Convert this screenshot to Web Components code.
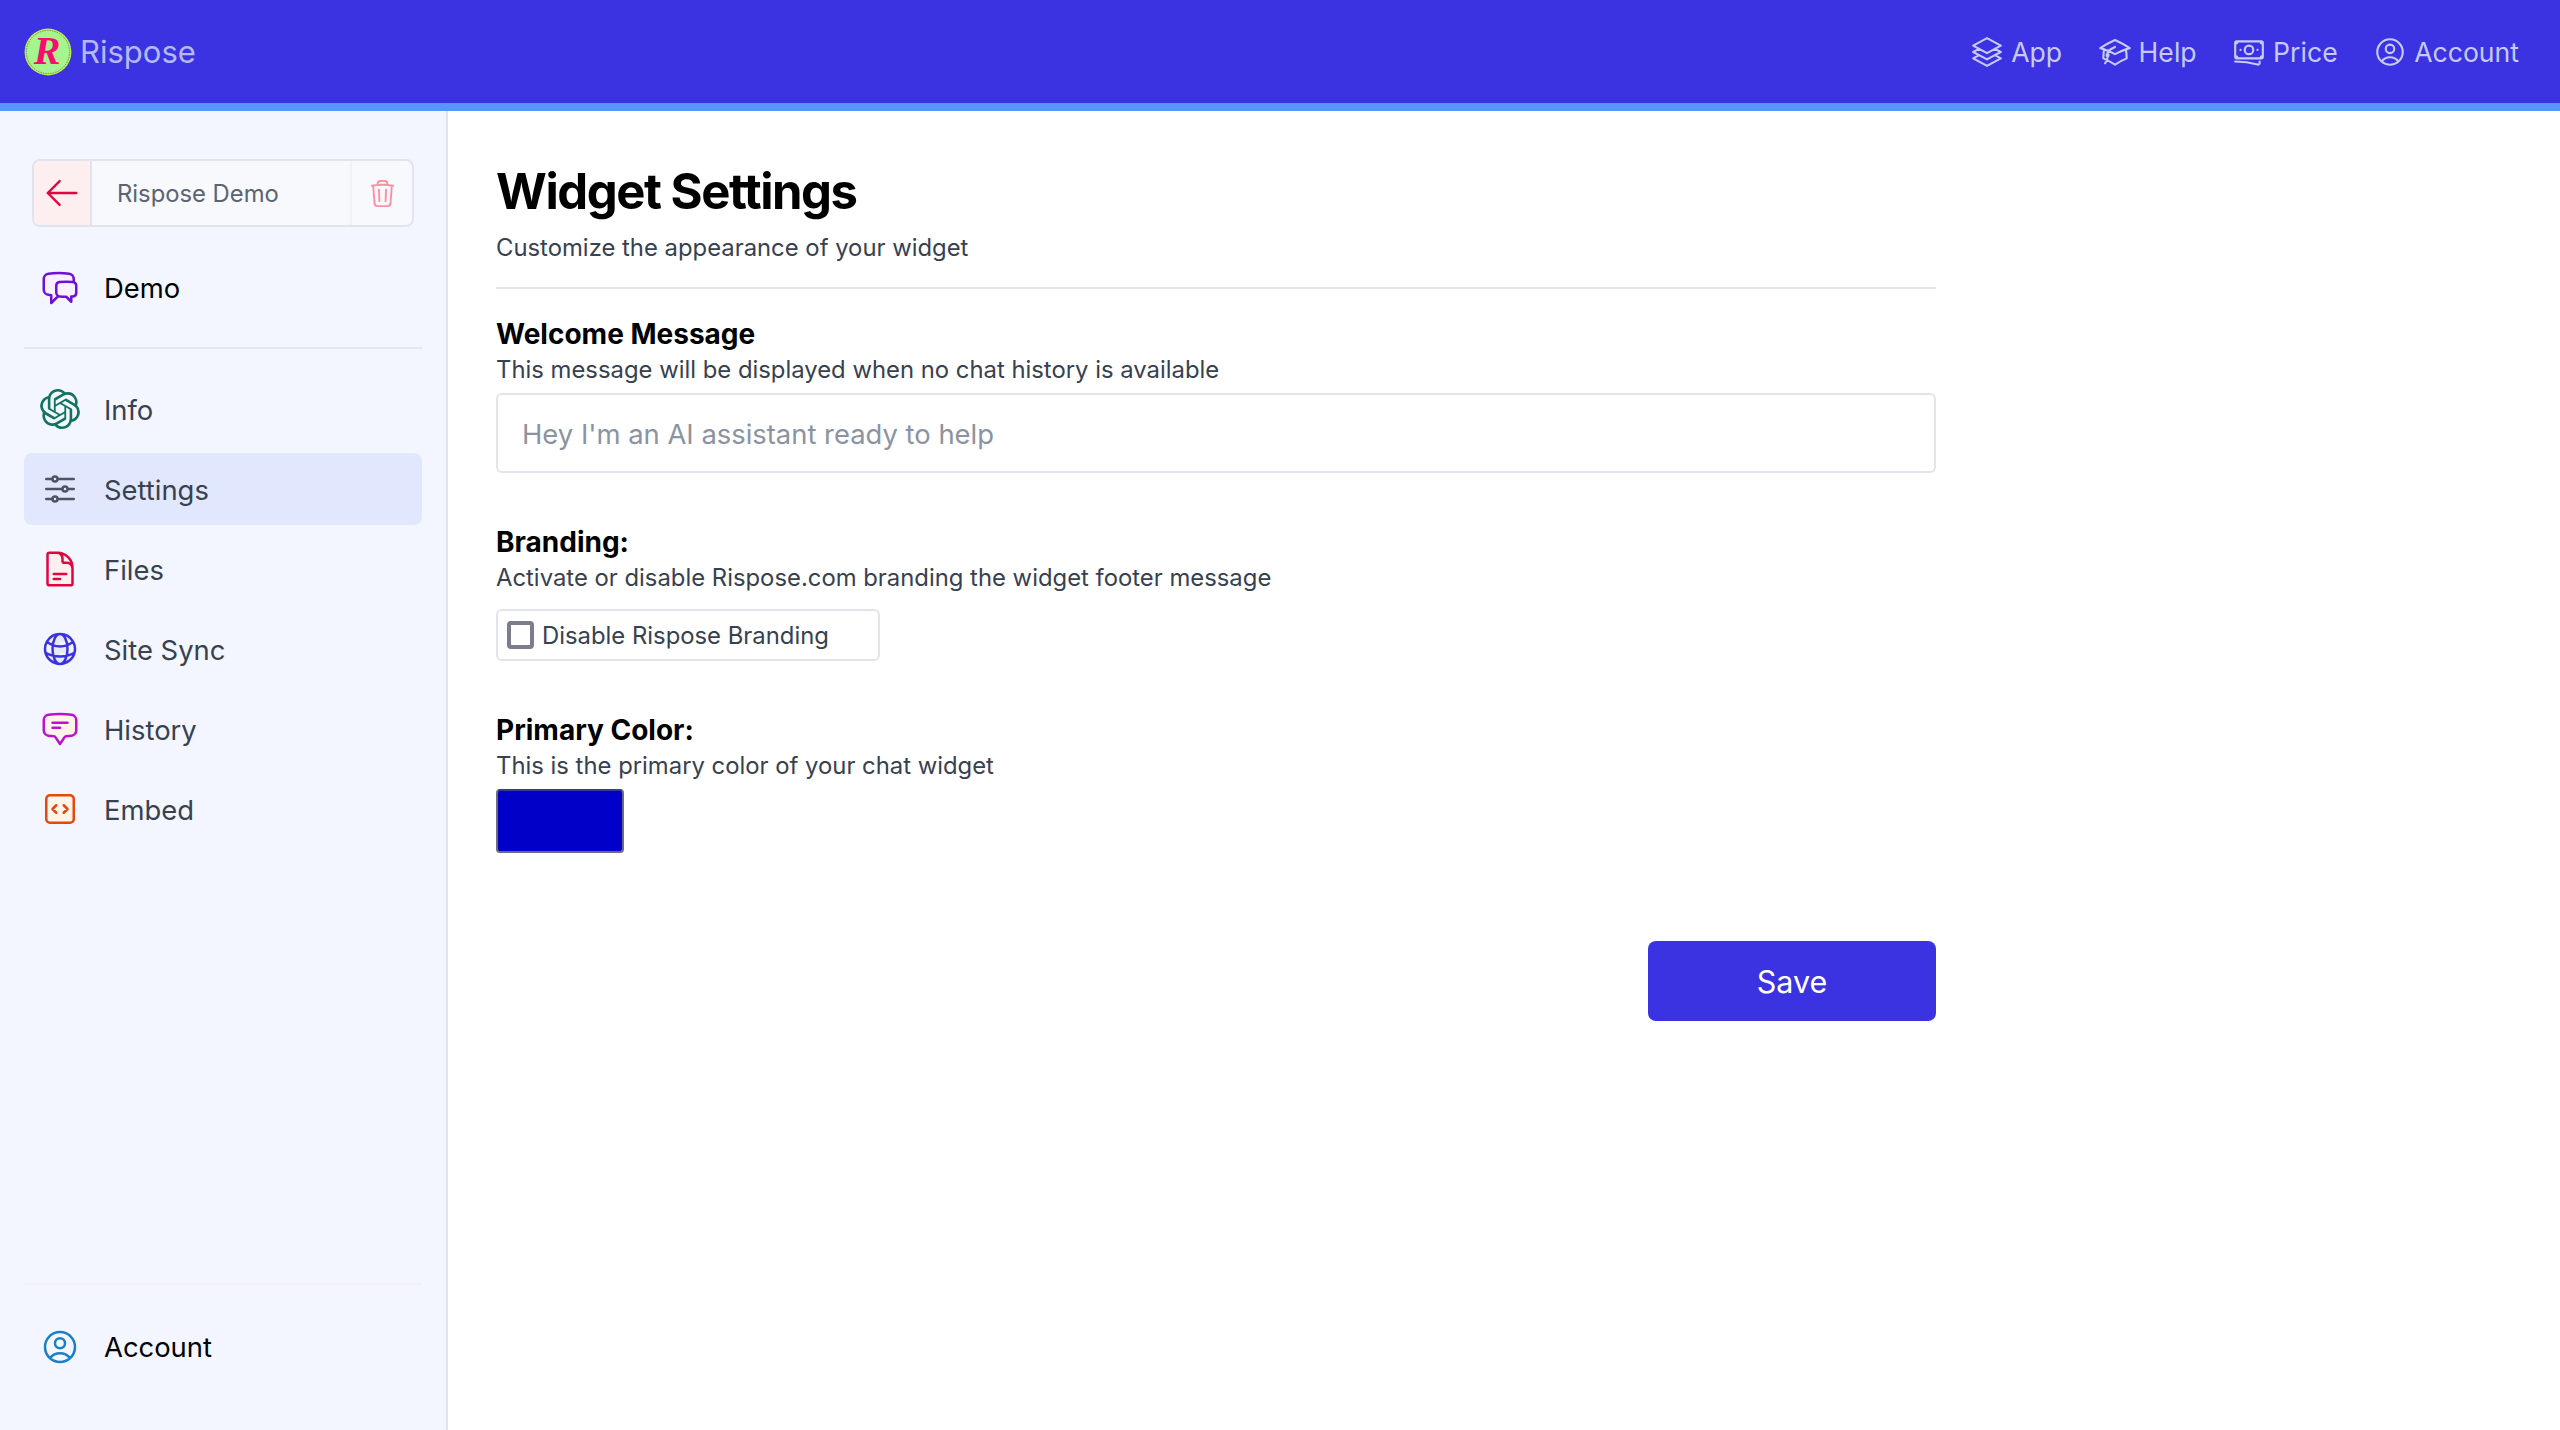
<!doctype html>
<html lang="en">
<head>
<meta charset="utf-8">
<title>Widget Settings</title>
<style>
  html, body { margin: 0; height: 100%; overflow: hidden; background: #fff; }
  body { font-family: Inter, "Liberation Sans", sans-serif; color: #000; }
</style>
</head>
<body>
<app-shell>
  <app-header slot="header">
    <top-link icon="stack">App</top-link>
    <top-link icon="cap">Help</top-link>
    <top-link icon="money">Price</top-link>
    <top-link icon="user">Account</top-link>
  </app-header>
  <side-bar slot="side">
    <project-switcher name="Rispose Demo"></project-switcher>
    <side-item icon="chats" tone="#6d11d6" fill="#f6f0ff" strong>Demo</side-item>
    <side-rule></side-rule>
    <side-item icon="openai" tone="#13735f" solid>Info</side-item>
    <side-item icon="sliders" tone="#4b5563" active>Settings</side-item>
    <side-item icon="doc" tone="#e0063f" fill="#fdeef0">Files</side-item>
    <side-item icon="globe" tone="#3b32e2" fill="#e6eafd">Site Sync</side-item>
    <side-item icon="bubble" tone="#bd11d1" fill="#fff3ea">History</side-item>
    <side-item icon="code" tone="#e04a0b" fill="#fff3ea">Embed</side-item>
    <side-item slot="foot" icon="user" tone="#1a7fc9" strong>Account</side-item>
  </side-bar>
  <widget-settings></widget-settings>
</app-shell>

<script>
const ICONS = {
  stack: "M6.429 9.75 2.25 12l4.179 2.25m0-4.5 5.571 3 5.571-3m-11.142 0L2.25 7.5 12 2.25l9.75 5.25-4.179 2.25m0 0L21.75 12l-4.179 2.25m0 0 4.179 2.25L12 21.75 2.25 16.5l4.179-2.25m11.142 0-5.571 3-5.571-3",
  cap: "M4.26 10.147a60.438 60.438 0 0 0-.491 6.347A48.62 48.62 0 0 1 12 20.904a48.62 48.62 0 0 1 8.232-4.41 60.46 60.46 0 0 0-.491-6.347m-15.482 0a50.636 50.636 0 0 0-2.658-.813A59.906 59.906 0 0 1 12 3.493a59.903 59.903 0 0 1 10.399 5.84c-.896.248-1.783.52-2.658.814m-15.482 0A50.717 50.717 0 0 1 12 13.489a50.702 50.702 0 0 1 7.74-3.342M6.75 15a.75.75 0 1 0 0-1.5.75.75 0 0 0 0 1.5Zm0 0v-3.675A55.378 55.378 0 0 1 12 8.443m-7.007 11.55A5.981 5.981 0 0 0 6.75 15.75v-1.5",
  money: "M2.25 18.75a60.07 60.07 0 0 1 15.797 2.101c.727.198 1.453-.342 1.453-1.096V18.75M3.75 4.5v.75A.75.75 0 0 1 3 6h-.75m0 0v-.375c0-.621.504-1.125 1.125-1.125H20.25M2.25 6v9m18-10.5v.75c0 .414.336.75.75.75h.75m-1.5-1.5h.375c.621 0 1.125.504 1.125 1.125v9.75c0 .621-.504 1.125-1.125 1.125h-.375m1.5-1.5H21a.75.75 0 0 0-.75.75v.75m0 0H3.75m0 0h-.375a1.125 1.125 0 0 1-1.125-1.125V15m1.5 1.5v-.75A.75.75 0 0 0 3 15h-.75M15 10.5a3 3 0 1 1-6 0 3 3 0 0 1 6 0Zm3 0h.008v.008H18V10.5Zm-12 0h.008v.008H6V10.5Z",
  user: "M17.982 18.725A7.488 7.488 0 0 0 12 15.75a7.488 7.488 0 0 0-5.982 2.975m11.963 0a9 9 0 1 0-11.963 0m11.963 0A8.966 8.966 0 0 1 12 21a8.966 8.966 0 0 1-5.982-2.275M15 9.75a3 3 0 1 1-6 0 3 3 0 0 1 6 0Z",
  back: "M10.5 19.5 3 12m0 0 7.5-7.5M3 12h18",
  trash: "m14.74 9-.346 9m-4.788 0L9.26 9m9.968-3.21c.342.052.682.107 1.022.166m-1.022-.165L18.16 19.673a2.25 2.25 0 0 1-2.244 2.077H8.084a2.25 2.25 0 0 1-2.244-2.077L4.772 5.79m14.456 0a48.108 48.108 0 0 0-3.478-.397m-12 .562c.34-.059.68-.114 1.022-.165m0 0a48.11 48.11 0 0 1 3.478-.397m7.5 0v-.916c0-1.18-.91-2.164-2.09-2.201a51.964 51.964 0 0 0-3.32 0c-1.18.037-2.09 1.022-2.09 2.201v.916m7.5 0a48.667 48.667 0 0 0-7.5 0",
  chats: "M20.25 8.511c.884.284 1.5 1.128 1.5 2.097v4.286c0 1.136-.847 2.1-1.98 2.193-.34.027-.68.052-1.02.072v3.091l-3-3c-1.354 0-2.694-.055-4.02-.163a2.115 2.115 0 0 1-.825-.242m9.345-8.334a2.126 2.126 0 0 0-.476-.095 48.64 48.64 0 0 0-8.048 0c-1.131.094-1.976 1.057-1.976 2.192v4.286c0 .837.46 1.58 1.155 1.951m9.345-8.334V6.637c0-1.621-1.152-3.026-2.76-3.235A48.455 48.455 0 0 0 11.25 3c-2.115 0-4.198.137-6.24.402-1.608.209-2.76 1.614-2.76 3.235v6.226c0 1.621 1.152 3.026 2.76 3.235.577.075 1.157.14 1.74.194V21l4.155-4.155",
  sliders: "M10.5 6h9.75M10.5 6a1.5 1.5 0 1 1-3 0m3 0a1.5 1.5 0 1 0-3 0M3.75 6H7.5m3 12h9.75m-9.75 0a1.5 1.5 0 0 1-3 0m3 0a1.5 1.5 0 0 0-3 0m-3.75 0H7.5m9-6h3.75m-3.75 0a1.5 1.5 0 0 1-3 0m3 0a1.5 1.5 0 0 0-3 0m-9.75 0h9.75",
  doc: "M19.5 14.25v-2.625a3.375 3.375 0 0 0-3.375-3.375h-1.5A1.125 1.125 0 0 1 13.5 7.125v-1.5a3.375 3.375 0 0 0-3.375-3.375H8.25m0 12.75h7.5m-7.5 3H12M10.5 2.25H5.625c-.621 0-1.125.504-1.125 1.125v17.25c0 .621.504 1.125 1.125 1.125h12.75c.621 0 1.125-.504 1.125-1.125V11.25a9 9 0 0 0-9-9Z",
  globe: "M12 21a9.004 9.004 0 0 0 8.716-6.747M12 21a9.004 9.004 0 0 1-8.716-6.747M12 21c2.485 0 4.5-4.03 4.5-9S14.485 3 12 3m0 18c-2.485 0-4.5-4.03-4.5-9S9.515 3 12 3m0 0a8.997 8.997 0 0 1 7.843 4.582M12 3a8.997 8.997 0 0 0-7.843 4.582m15.686 0A11.953 11.953 0 0 1 12 10.5c-2.998 0-5.74-1.1-7.843-2.918m15.686 0A8.959 8.959 0 0 1 21 12c0 .778-.099 1.533-.284 2.253m0 0A17.919 17.919 0 0 1 12 16.5c-3.162 0-6.133-.815-8.716-2.247m0 0A9.015 9.015 0 0 1 3 12c0-1.605.42-3.113 1.157-4.418",
  bubble: "M7.5 8.25h9m-9 3H12m-9.75 1.51c0 1.6 1.123 2.994 2.707 3.227 1.129.166 2.27.293 3.423.379.35.026.67.21.865.501L12 21l2.755-4.133a1.14 1.14 0 0 1 .865-.501 48.172 48.172 0 0 0 3.423-.379c1.584-.233 2.707-1.626 2.707-3.228V6.741c0-1.602-1.123-2.995-2.707-3.228A48.394 48.394 0 0 0 12 3c-2.392 0-4.744.175-7.043.513C3.373 3.746 2.25 5.14 2.25 6.741v6.018Z",
  code: "M14.25 9.75 16.5 12l-2.25 2.25m-4.5 0L7.5 12l2.25-2.25M6 20.25h12A2.25 2.25 0 0 0 20.25 18V6A2.25 2.25 0 0 0 18 3.75H6A2.25 2.25 0 0 0 3.75 6v12c0 1.243 1.007 2.25 2.25 2.25Z",
  openai: "M22.2819 9.8211a5.9847 5.9847 0 0 0-.5157-4.9108 6.0462 6.0462 0 0 0-6.5098-2.9A6.0651 6.0651 0 0 0 4.9807 4.1818a5.9847 5.9847 0 0 0-3.9977 2.9 6.0462 6.0462 0 0 0 .7427 7.0966 5.98 5.98 0 0 0 .511 4.9107 6.051 6.051 0 0 0 6.5146 2.9001A5.9847 5.9847 0 0 0 13.2599 24a6.0557 6.0557 0 0 0 5.7718-4.2058 5.9894 5.9894 0 0 0 3.9977-2.9001 6.0557 6.0557 0 0 0-.7475-7.0729zm-9.022 12.6081a4.4755 4.4755 0 0 1-2.8764-1.0408l.1419-.0804 4.7783-2.7582a.7948.7948 0 0 0 .3927-.6813v-6.7369l2.02 1.1686a.071.071 0 0 1 .038.052v5.5826a4.504 4.504 0 0 1-4.4945 4.4944zm-9.6607-4.1254a4.4708 4.4708 0 0 1-.5346-3.0137l.142.0852 4.783 2.7582a.7712.7712 0 0 0 .7806 0l5.8428-3.3685v2.3324a.0804.0804 0 0 1-.0332.0615L9.74 19.9502a4.4992 4.4992 0 0 1-6.1408-1.6464zM2.3408 7.8956a4.485 4.485 0 0 1 2.3655-1.9728V11.6a.7664.7664 0 0 0 .3879.6765l5.8144 3.3543-2.0201 1.1685a.0757.0757 0 0 1-.071 0l-4.8303-2.7865A4.504 4.504 0 0 1 2.3408 7.872zm16.5963 3.8558L13.1038 8.364 15.1192 7.2a.0757.0757 0 0 1 .071 0l4.8303 2.7913a4.4944 4.4944 0 0 1-.6765 8.1042v-5.6772a.79.79 0 0 0-.407-.667zm2.0107-3.0231l-.142-.0852-4.7735-2.7818a.7759.7759 0 0 0-.7854 0L9.409 9.2297V6.8974a.0662.0662 0 0 1 .0284-.0615l4.8303-2.7866a4.4992 4.4992 0 0 1 6.6802 4.66zM8.3065 12.863l-2.02-1.1638a.0804.0804 0 0 1-.038-.0567V6.0742a4.4992 4.4992 0 0 1 7.3757-3.4537l-.142.0805L8.704 5.459a.7948.7948 0 0 0-.3927.6813zm1.0976-2.3654l2.602-1.4998 2.6069 1.4998v2.9994l-2.5974 1.4997-2.6067-1.4997Z"
};

function iconSvg(name, size, tone, fill, solid) {
  if (solid) {
    return `<svg width="${size}" height="${size}" viewBox="0 0 24 24" fill="${tone}"><path d="${ICONS[name]}"/></svg>`;
  }
  return `<svg width="${size}" height="${size}" viewBox="0 0 24 24" fill="${fill || "none"}" stroke="${tone}" stroke-width="1.5" stroke-linecap="round" stroke-linejoin="round"><path d="${ICONS[name]}"/></svg>`;
}

class AppShell extends HTMLElement {
  constructor() {
    super();
    this.attachShadow({ mode: "open" });
    this.shadowRoot.innerHTML = `
<style>
  :host { display: flex; flex-direction: column; height: 100vh; }
  #body { flex: 1; display: flex; min-height: 0; }
</style>
<slot name="header"></slot>
<div id="body">
  <slot name="side"></slot>
  <slot></slot>
</div>`;
  }
}

class AppHeader extends HTMLElement {
  constructor() {
    super();
    this.attachShadow({ mode: "open" });
    this.shadowRoot.innerHTML = `
<style>
  :host {
    display: flex; align-items: center; justify-content: space-between;
    box-sizing: border-box; height: 111px; padding: 0 41px 0 24px;
    background: #3b32e2; border-bottom: 8px solid #5596ff;
  }
  #brand { display: flex; align-items: center; gap: 8px; color: #b3b9fd; font-size: 31px; line-height: 48px; }
  nav { display: flex; align-items: center; gap: 35.5px; }
</style>
<div id="brand">
  <svg width="48" height="48" viewBox="0 0 48 48">
    <circle cx="24" cy="24" r="23.4" fill="#c9f04a"/>
    <circle cx="24" cy="24" r="21.6" fill="#a5f58e" stroke="#5e8f70" stroke-width="1" stroke-dasharray="1.5 1"/>
    <text x="23" y="36" text-anchor="middle" font-family="'Liberation Serif', serif" font-weight="700" font-style="italic" font-size="40" fill="#fb0a6f">R</text>
  </svg>
  <span>Rispose</span>
</div>
<nav><slot></slot></nav>`;
  }
}

class TopLink extends HTMLElement {
  constructor() {
    super();
    this.attachShadow({ mode: "open" });
    this.shadowRoot.innerHTML = `
<style>
  :host { display: flex; align-items: center; gap: 7px; color: #c6caff; font-size: 26.6px; line-height: 40px; }
  svg { display: block; }
</style>
${iconSvg(this.getAttribute("icon"), 34, "#c6caff")}
<span><slot></slot></span>`;
  }
}

class SideBar extends HTMLElement {
  constructor() {
    super();
    this.attachShadow({ mode: "open" });
    this.shadowRoot.innerHTML = `
<style>
  :host {
    display: flex; flex-direction: column; flex: none;
    box-sizing: border-box; width: 448px; padding: 48px 24px 47px;
    background: #f3f6ff; border-right: 2px solid #e1e4ec;
  }
  #list { display: flex; flex-direction: column; gap: 8px; }
  #foot { margin-top: auto; border-top: 2px solid #f0f1f6; padding-top: 26px; }
</style>
<div id="list"><slot></slot></div>
<div id="foot"><slot name="foot"></slot></div>`;
  }
}

class ProjectSwitcher extends HTMLElement {
  constructor() {
    super();
    this.attachShadow({ mode: "open" });
    this.shadowRoot.innerHTML = `
<style>
  :host {
    display: flex; box-sizing: border-box; width: 382px; height: 68px; margin: 0 0 17px 8px;
    background: #f8f9fc; border: 2px solid #e1e4ec; border-radius: 8px; overflow: hidden;
  }
  #back { flex: none; width: 56px; display: flex; align-items: center; justify-content: center; background: #fdeef0; border-right: 2px solid #e1e4ec; }
  #name { flex: 1; padding-left: 25px; font-size: 23.8px; line-height: 65px; color: #5b6474; }
  #del { flex: none; width: 60px; display: flex; align-items: center; justify-content: center; border-left: 2px solid #f1f2f6; }
  svg { display: block; }
</style>
<div id="back">${iconSvg("back", 38, "#e0063f")}</div>
<div id="name">${this.getAttribute("name")}</div>
<div id="del">${iconSvg("trash", 31, "#ff8fa3")}</div>`;
  }
}

class SideItem extends HTMLElement {
  constructor() {
    super();
    this.attachShadow({ mode: "open" });
    const solid = this.hasAttribute("solid");
    this.shadowRoot.innerHTML = `
<style>
  :host {
    display: flex; align-items: center; gap: 24px; box-sizing: border-box;
    height: 72px; padding-left: 16px; border-radius: 8px;
    font-size: 27.4px; color: #374151;
  }
  :host([strong]) { color: #000; }
  :host([active]) { background: #e1e7fc; }
  :host(:not([strong])) span { padding-top: 2px; }
  svg { display: block; flex: none; }
</style>
${iconSvg(this.getAttribute("icon"), 40, this.getAttribute("tone"), this.getAttribute("fill"), solid)}
<span><slot></slot></span>`;
  }
}

class SideRule extends HTMLElement {
  constructor() {
    super();
    this.attachShadow({ mode: "open" });
    this.shadowRoot.innerHTML = `
<style>
  :host { display: block; height: 2px; margin: 15px 0 16px; background: #e4e6ee; }
</style>`;
  }
}

class SettingField extends HTMLElement {
  constructor() {
    super();
    this.attachShadow({ mode: "open" });
    this.shadowRoot.innerHTML = `
<style>
  :host { display: block; }
  h2 { margin: 0 0 1px; font-size: 28px; line-height: 36px; font-weight: 700; color: #000; }
  p { margin: 0 0 7px; padding-top: 1px; font-size: 23.85px; line-height: 32px; color: #374151; }
</style>
<h2>${this.getAttribute("label")}</h2>
<p>${this.getAttribute("hint")}</p>
<slot></slot>`;
  }
}

class WidgetSettings extends HTMLElement {
  constructor() {
    super();
    this.attachShadow({ mode: "open" });
    this.shadowRoot.innerHTML = `
<style>
  :host { display: block; flex: 1; padding: 51px 0 0 48px; }
  #wrap { width: 1440px; }
  h1 { margin: 0; font-size: 49px; line-height: 60px; font-weight: 700; letter-spacing: -1.45px; color: #000; }
  #sub { margin: 10px 0 23px; font-size: 23.85px; line-height: 32px; color: #374151; }
  hr { margin: 0 0 27px; border: 0; height: 2px; background: #e1e4ec; }
  #welcome { margin-bottom: 51px; }
  #brandfield { margin-bottom: 51px; }
  #text {
    box-sizing: border-box; height: 80px; padding-left: 24px;
    border: 2px solid #e1e4ec; border-radius: 6px;
    font-size: 27.4px; line-height: 78px; color: #8b93a2;
  }
  #check {
    display: flex; align-items: center; gap: 8px; box-sizing: border-box;
    width: 384px; height: 52px; margin-top: 15px; padding-left: 9px;
    border: 2px solid #e1e4ec; border-radius: 6px;
    font-size: 23.85px; color: #374151;
  }
  #box { flex: none; box-sizing: border-box; width: 27px; height: 28px; border: 4px solid #7c7c8c; border-radius: 4px; background: #fff; }
  #swatch { box-sizing: border-box; width: 128px; height: 64px; background: #0000c8; border: 2px solid #6a6a80; border-top-color: #3a3a90; border-radius: 4px; }
  #actions { display: flex; justify-content: flex-end; margin-top: 88px; }
  button {
    width: 288px; height: 80px; padding: 0; border: 0; border-radius: 8px; background: #3b32e2; color: #fff;
    font: 400 30.5px Inter, "Liberation Sans", sans-serif;
  }
</style>
<div id="wrap">
  <h1>Widget Settings</h1>
  <div id="sub">Customize the appearance of your widget</div>
  <hr>
  <setting-field id="welcome" label="Welcome Message" hint="This message will be displayed when no chat history is available">
    <div id="text" role="textbox">Hey I'm an AI assistant ready to help</div>
  </setting-field>
  <setting-field id="brandfield" label="Branding:" hint="Activate or disable Rispose.com branding the widget footer message">
    <label id="check"><span id="box"></span><span>Disable Rispose Branding</span></label>
  </setting-field>
  <setting-field label="Primary Color:" hint="This is the primary color of your chat widget">
    <div id="swatch"></div>
  </setting-field>
  <div id="actions"><button>Save</button></div>
</div>`;
  }
}

customElements.define("setting-field", SettingField);
customElements.define("widget-settings", WidgetSettings);
customElements.define("side-rule", SideRule);
customElements.define("side-item", SideItem);
customElements.define("project-switcher", ProjectSwitcher);
customElements.define("side-bar", SideBar);
customElements.define("top-link", TopLink);
customElements.define("app-header", AppHeader);
customElements.define("app-shell", AppShell);
</script>
</body>
</html>
